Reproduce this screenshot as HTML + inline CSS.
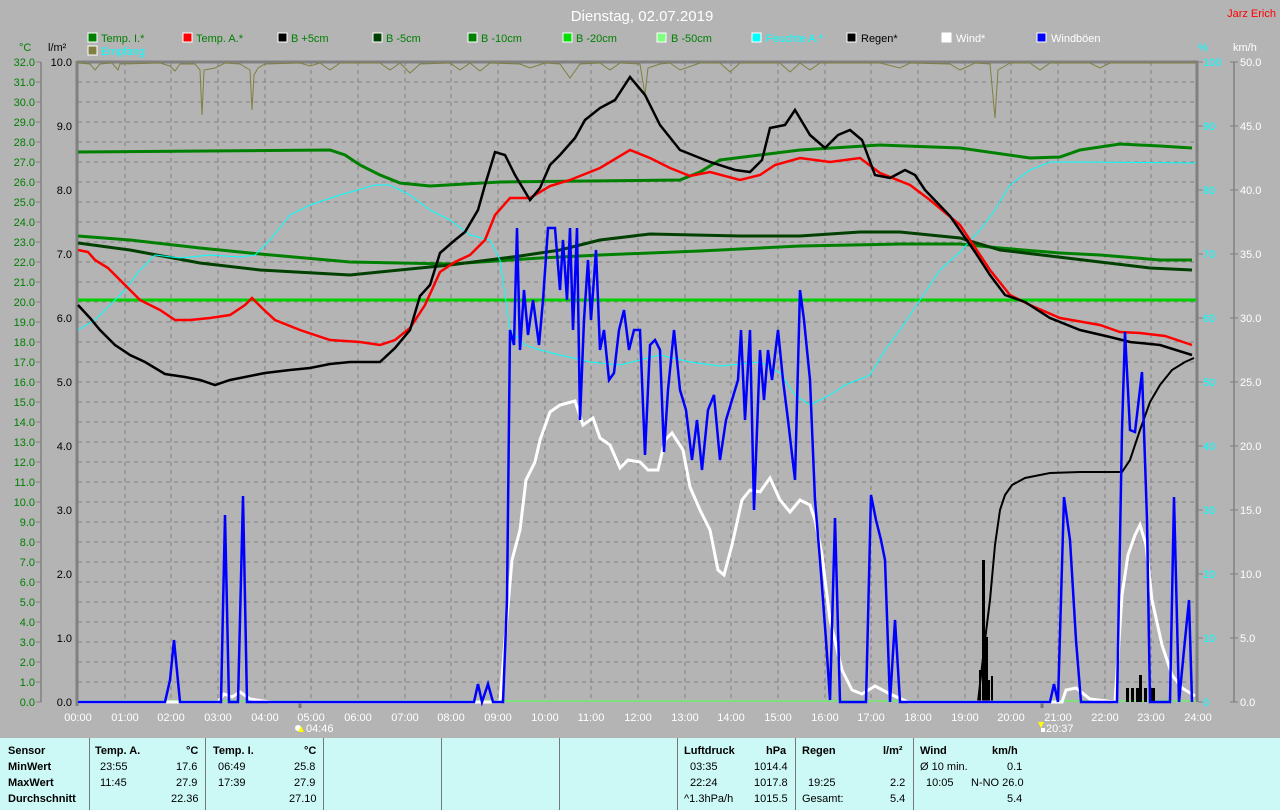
<!DOCTYPE html>
<html><head><meta charset="utf-8"><style>
html,body{margin:0;padding:0;background:#b4b4b4;width:1280px;height:810px;overflow:hidden;font-family:"Liberation Sans",sans-serif}
svg{position:absolute;left:0;top:0}
#tbl{position:absolute;left:0;top:738px;width:1280px;height:72px;background:#ccf8f6;font-size:11px;color:#000}
#tbl .v{position:absolute;top:0;width:1px;height:72px;background:#777}
#tbl span{position:absolute;white-space:nowrap}
.b{font-weight:bold}
</style></head><body>
<svg width="1280" height="738" font-family="Liberation Sans, sans-serif">
<text x="642" y="21" fill="#fff" font-size="15" text-anchor="middle">Dienstag, 02.07.2019</text>
<text x="1276" y="17" fill="#f00" font-size="11" text-anchor="end">Jarz Erich</text>
<g font-size="11">
<rect x="88" y="33" width="9" height="9" fill="#008000" stroke="#fff"/><text x="101" y="42" fill="#008000">Temp. I.*</text>
<rect x="183" y="33" width="9" height="9" fill="#f00" stroke="#fff"/><text x="196" y="42" fill="#008000">Temp. A.*</text>
<rect x="278" y="33" width="9" height="9" fill="#000" stroke="#fff"/><text x="291" y="42" fill="#008000">B +5cm</text>
<rect x="373" y="33" width="9" height="9" fill="#004000" stroke="#fff"/><text x="386" y="42" fill="#008000">B -5cm</text>
<rect x="468" y="33" width="9" height="9" fill="#008000" stroke="#fff"/><text x="481" y="42" fill="#008000">B -10cm</text>
<rect x="563" y="33" width="9" height="9" fill="#00e000" stroke="#fff"/><text x="576" y="42" fill="#008000">B -20cm</text>
<rect x="657" y="33" width="9" height="9" fill="#80ff80" stroke="#fff"/><text x="671" y="42" fill="#008000">B -50cm</text>
<rect x="752" y="33" width="9" height="9" fill="#0ff" stroke="#fff"/><text x="766" y="42" fill="#0ff">Feuchte A.*</text>
<rect x="847" y="33" width="9" height="9" fill="#000" stroke="#fff"/><text x="861" y="42" fill="#000">Regen*</text>
<rect x="942" y="33" width="9" height="9" fill="#fff" stroke="#fff"/><text x="956" y="42" fill="#fff">Wind*</text>
<rect x="1037" y="33" width="9" height="9" fill="#00f" stroke="#fff"/><text x="1051" y="42" fill="#fff">Windböen</text>
<rect x="88" y="46" width="9" height="9" fill="#808040" stroke="#fff"/><text x="101" y="55" fill="#0ff">Empfang</text>
<text x="19" y="51" fill="#008000">°C</text>
<text x="48" y="51" fill="#000">l/m²</text>
<text x="1198" y="51" fill="#0ff">%</text>
<text x="1233" y="51" fill="#fff">km/h</text>
</g>
<g stroke="#808080" stroke-dasharray="4,4" stroke-width="1">
<path d="M78 82H1196M78 102H1196M78 122H1196M78 142H1196M78 162H1196M78 182H1196M78 202H1196M78 222H1196M78 242H1196M78 262H1196M78 282H1196M78 302H1196M78 322H1196M78 342H1196M78 362H1196M78 382H1196M78 402H1196M78 422H1196M78 442H1196M78 462H1196M78 482H1196M78 502H1196M78 522H1196M78 542H1196M78 562H1196M78 582H1196M78 602H1196M78 622H1196M78 642H1196M78 662H1196M78 682H1196"/>
<path d="M125 62V702M171 62V702M218 62V702M265 62V702M311 62V702M358 62V702M405 62V702M451 62V702M498 62V702M545 62V702M591 62V702M638 62V702M685 62V702M731 62V702M778 62V702M825 62V702M871 62V702M918 62V702M965 62V702M1011 62V702M1058 62V702M1105 62V702M1151 62V702"/>
</g>
<path d="M77 62H1197V702" fill="none" stroke="#808080" stroke-width="3"/>
<path d="M77 61V706" stroke="#808080" stroke-width="3"/>
<path d="M41 62V702M1234 62V702" stroke="#808080" stroke-width="1.5"/>
<path d="M300 700V708M1042 700V708" stroke="#777" stroke-width="3"/>
<g font-size="11" fill="#008000" text-anchor="end">
<text x="35" y="66">32.0</text><text x="35" y="86">31.0</text><text x="35" y="106">30.0</text><text x="35" y="126">29.0</text><text x="35" y="146">28.0</text><text x="35" y="166">27.0</text><text x="35" y="186">26.0</text><text x="35" y="206">25.0</text><text x="35" y="226">24.0</text><text x="35" y="246">23.0</text><text x="35" y="266">22.0</text><text x="35" y="286">21.0</text><text x="35" y="306">20.0</text><text x="35" y="326">19.0</text><text x="35" y="346">18.0</text><text x="35" y="366">17.0</text><text x="35" y="386">16.0</text><text x="35" y="406">15.0</text><text x="35" y="426">14.0</text><text x="35" y="446">13.0</text><text x="35" y="466">12.0</text><text x="35" y="486">11.0</text><text x="35" y="506">10.0</text><text x="35" y="526">9.0</text><text x="35" y="546">8.0</text><text x="35" y="566">7.0</text><text x="35" y="586">6.0</text><text x="35" y="606">5.0</text><text x="35" y="626">4.0</text><text x="35" y="646">3.0</text><text x="35" y="666">2.0</text><text x="35" y="686">1.0</text><text x="35" y="706">0.0</text>
</g>
<g stroke="#808080"><path d="M36 62H41M36 82H41M36 102H41M36 122H41M36 142H41M36 162H41M36 182H41M36 202H41M36 222H41M36 242H41M36 262H41M36 282H41M36 302H41M36 322H41M36 342H41M36 362H41M36 382H41M36 402H41M36 422H41M36 442H41M36 462H41M36 482H41M36 502H41M36 522H41M36 542H41M36 562H41M36 582H41M36 602H41M36 622H41M36 642H41M36 662H41M36 682H41M36 702H41"/>
<path d="M1198 62H1203M1198 126H1203M1198 190H1203M1198 254H1203M1198 318H1203M1198 382H1203M1198 446H1203M1198 510H1203M1198 574H1203M1198 638H1203M1198 702H1203M1230 62H1238M1230 126H1238M1230 190H1238M1230 254H1238M1230 318H1238M1230 382H1238M1230 446H1238M1230 510H1238M1230 574H1238M1230 638H1238M1230 702H1238"/></g>
<g font-size="11" fill="#000" text-anchor="end">
<text x="72" y="66">10.0</text><text x="72" y="130">9.0</text><text x="72" y="194">8.0</text><text x="72" y="258">7.0</text><text x="72" y="322">6.0</text><text x="72" y="386">5.0</text><text x="72" y="450">4.0</text><text x="72" y="514">3.0</text><text x="72" y="578">2.0</text><text x="72" y="642">1.0</text><text x="72" y="706">0.0</text>
</g>
<g font-size="11" fill="#0ff">
<text x="1203" y="66">100</text><text x="1203" y="130">90</text><text x="1203" y="194">80</text><text x="1203" y="258">70</text><text x="1203" y="322">60</text><text x="1203" y="386">50</text><text x="1203" y="450">40</text><text x="1203" y="514">30</text><text x="1203" y="578">20</text><text x="1203" y="642">10</text><text x="1203" y="706">0</text>
</g>
<g font-size="11" fill="#fff">
<text x="1240" y="66">50.0</text><text x="1240" y="130">45.0</text><text x="1240" y="194">40.0</text><text x="1240" y="258">35.0</text><text x="1240" y="322">30.0</text><text x="1240" y="386">25.0</text><text x="1240" y="450">20.0</text><text x="1240" y="514">15.0</text><text x="1240" y="578">10.0</text><text x="1240" y="642">5.0</text><text x="1240" y="706">0.0</text>
</g>
<g font-size="11" fill="#fff" text-anchor="middle">
<text x="78" y="721">00:00</text><text x="125" y="721">01:00</text><text x="171" y="721">02:00</text><text x="218" y="721">03:00</text><text x="265" y="721">04:00</text><text x="311" y="721">05:00</text><text x="358" y="721">06:00</text><text x="405" y="721">07:00</text><text x="451" y="721">08:00</text><text x="498" y="721">09:00</text><text x="545" y="721">10:00</text><text x="591" y="721">11:00</text><text x="638" y="721">12:00</text><text x="685" y="721">13:00</text><text x="731" y="721">14:00</text><text x="778" y="721">15:00</text><text x="825" y="721">16:00</text><text x="871" y="721">17:00</text><text x="918" y="721">18:00</text><text x="965" y="721">19:00</text><text x="1011" y="721">20:00</text><text x="1058" y="721">21:00</text><text x="1105" y="721">22:00</text><text x="1151" y="721">23:00</text><text x="1198" y="721">24:00</text>
</g>
<g font-size="11" fill="#fff"><text x="306" y="732">04:46</text><text x="1046" y="732">20:37</text></g>
<circle cx="298" cy="728" r="3" fill="#fff"/><path d="M301 726l-3 6h6z" fill="#ff0"/>
<path d="M1038 722l3 6 3-6z" fill="#ff0"/><rect x="1041" y="728" width="4" height="4" fill="#fff"/>
<polyline fill="none" stroke="#808040" stroke-width="1" points="78,63 90,64 95,70 100,64 112,63 118,70 120,64 160,63 170,66 175,71 180,64 195,64 200,70 202,115 204,70 215,68 225,63 240,64 250,70 252,110 254,75 258,68 265,64 300,63 310,66 320,63 330,70 340,63 380,63 390,70 400,63 410,73 420,64 450,63 460,70 470,63 480,71 490,63 520,64 530,68 545,63 560,64 570,78 580,64 600,63 610,70 620,63 640,64 645,95 648,68 660,64 670,63 680,70 700,63 720,63 730,72 740,63 780,63 790,72 800,63 810,70 820,63 880,63 900,68 910,63 950,64 960,70 975,63 990,64 995,118 998,70 1010,63 1030,63 1040,70 1050,63 1090,63 1100,68 1110,63 1196,63"/>
<path d="M78 300H1196" stroke="#00d000" stroke-width="3"/>
<path d="M78 701H1196" stroke="#80e080" stroke-width="2"/>
<polyline fill="none" stroke="#008000" stroke-width="3" points="78,152 330,150 345,155 360,165 380,175 400,183 430,186 500,182 680,180 700,172 720,160 800,150 880,145 960,148 1030,158 1060,157 1080,150 1120,144 1160,146 1192,148"/>
<polyline fill="none" stroke="#008000" stroke-width="3" points="78,236 130,240 200,248 260,254 350,262 450,264 540,258 600,255 700,251 800,246 900,244 960,244 1000,248 1060,253 1100,255 1160,260 1192,260"/>
<polyline fill="none" stroke="#004000" stroke-width="3" points="78,243 130,250 200,263 260,270 350,275 450,265 520,256 560,250 600,240 650,234 740,236 800,236 860,232 900,232 960,238 1000,250 1100,262 1150,268 1192,270"/>
<polyline fill="none" stroke="#0ff" stroke-width="1" points="78,330 95,320 115,300 125,290 140,270 155,255 180,258 210,255 240,257 255,255 270,240 290,215 310,205 340,195 375,185 390,185 410,195 430,210 450,220 470,235 490,240 500,260 510,330 525,345 540,350 560,355 590,362 620,365 660,355 690,362 720,366 760,362 780,373 795,395 810,405 830,395 845,385 870,375 885,350 900,330 920,300 940,270 960,252 980,230 995,210 1010,185 1030,170 1050,162 1080,162 1196,163"/>
<polyline fill="none" stroke="#f00" stroke-width="2.5" points="78,250 88,252 95,260 108,268 120,280 140,300 160,310 175,320 190,320 210,318 230,315 245,305 252,298 262,308 275,320 300,330 330,340 360,342 380,345 395,340 410,328 425,305 440,272 455,262 470,255 485,240 495,215 510,198 530,198 550,186 570,180 600,168 630,150 650,158 670,168 690,176 710,172 740,180 760,175 775,165 800,158 830,162 860,158 880,173 910,185 930,200 960,225 990,270 1010,295 1030,305 1060,318 1100,325 1120,332 1140,333 1165,336 1192,345"/>
<polyline fill="none" stroke="#000" stroke-width="2.5" points="78,305 90,318 100,330 115,345 130,355 145,362 165,374 185,377 200,380 215,385 230,380 245,377 265,373 290,370 310,368 330,364 350,362 380,362 395,348 410,330 420,296 430,285 440,253 455,240 465,232 478,210 485,185 495,152 505,155 515,175 530,200 540,188 550,165 560,155 575,138 585,120 600,108 615,100 630,77 645,95 660,125 680,150 710,162 735,170 750,172 762,160 770,128 785,125 795,110 810,135 825,148 838,135 850,130 862,140 875,175 890,178 905,170 915,175 925,190 950,216 975,252 990,275 1005,295 1025,302 1050,318 1080,330 1110,337 1130,342 1160,345 1192,355"/>
<g fill="#000">
<rect x="979" y="670" width="2" height="32"/><rect x="982" y="560" width="3" height="142"/><rect x="985" y="637" width="3" height="65"/><rect x="988" y="680" width="2" height="22"/><rect x="991" y="676" width="2" height="26"/>
<rect x="1126" y="688" width="3" height="14"/><rect x="1131" y="688" width="3" height="14"/><rect x="1136" y="688" width="3" height="14"/><rect x="1139" y="675" width="3" height="27"/><rect x="1144" y="688" width="3" height="14"/><rect x="1149" y="688" width="3" height="14"/><rect x="1152" y="688" width="3" height="14"/>
</g>
<polyline fill="none" stroke="#000" stroke-width="2" points="978,702 985,640 990,600 995,545 1000,510 1005,495 1012,485 1025,478 1050,473 1080,472 1122,472 1130,460 1140,430 1150,402 1160,385 1172,370 1185,362 1194,358"/>
<polyline fill="none" stroke="#fff" stroke-width="3" points="78,702 218,702 224,694 232,697 240,692 250,699 270,702 500,702 505,640 512,560 520,530 526,480 535,462 540,440 550,412 560,405 575,401 583,425 593,418 600,438 610,445 620,468 628,460 640,462 648,470 658,470 665,440 672,433 683,450 690,487 700,510 710,530 718,570 724,575 732,545 742,500 750,490 760,492 770,478 780,500 790,512 800,500 810,505 815,520 822,555 830,620 842,670 852,690 862,694 875,686 890,694 908,702 1062,702 1066,690 1076,688 1090,699 1115,702 1122,595 1128,555 1135,535 1140,525 1146,545 1152,600 1162,645 1172,675 1182,688 1195,696"/>
<polyline fill="none" stroke="#00f" stroke-width="2.5" points="78,702 165,702 170,680 174,640 180,702 221,702 225,515 229,702 238,702 243,496 247,702 474,702 478,684 482,702 488,684 493,702 503,702 507,600 510,330 514,345 517,228 520,350 524,290 528,335 533,300 539,345 543,300 548,228 555,228 560,290 563,240 567,300 570,228 573,330 577,228 580,420 584,320 588,260 591,320 596,250 600,350 604,330 609,380 614,373 619,330 624,310 629,350 634,330 640,330 645,455 650,345 655,340 660,350 664,452 668,390 674,330 680,390 686,410 692,460 697,420 702,470 708,410 714,395 720,460 726,420 732,400 738,380 741,330 745,420 750,330 754,510 760,350 764,400 768,350 772,380 778,330 783,380 788,420 795,480 800,290 804,320 810,380 815,500 820,560 826,640 830,700 835,518 840,702 866,702 871,495 876,520 881,540 885,560 890,702 895,620 900,702 1050,702 1054,684 1058,702 1064,497 1070,540 1076,640 1081,702 1117,702 1122,430 1125,332 1130,430 1135,432 1142,372 1147,520 1150,702 1170,702 1174,497 1179,702 1184,650 1189,600 1192,702"/>
</svg>
<div id="tbl">
<div class="v" style="left:89px"></div><div class="v" style="left:205px"></div><div class="v" style="left:323px"></div><div class="v" style="left:441px"></div><div class="v" style="left:559px"></div><div class="v" style="left:677px"></div><div class="v" style="left:795px"></div><div class="v" style="left:913px"></div>
<span class="b" style="left:8px;top:7px">Sensor</span><span class="b" style="left:8px;top:23px">MinWert</span><span class="b" style="left:8px;top:39px">MaxWert</span><span class="b" style="left:8px;top:55px">Durchschnitt</span>
<span class="b" style="left:95px;top:7px">Temp. A.</span><span class="b" style="left:186px;top:7px">°C</span>
<span style="left:100px;top:23px">23:55</span><span style="left:176px;top:23px">17.6</span>
<span style="left:100px;top:39px">11:45</span><span style="left:176px;top:39px">27.9</span>
<span style="left:171px;top:55px">22.36</span>
<span class="b" style="left:213px;top:7px">Temp. I.</span><span class="b" style="left:304px;top:7px">°C</span>
<span style="left:218px;top:23px">06:49</span><span style="left:294px;top:23px">25.8</span>
<span style="left:218px;top:39px">17:39</span><span style="left:294px;top:39px">27.9</span>
<span style="left:289px;top:55px">27.10</span>
<span class="b" style="left:684px;top:7px">Luftdruck</span><span class="b" style="left:766px;top:7px">hPa</span>
<span style="left:690px;top:23px">03:35</span><span style="left:754px;top:23px">1014.4</span>
<span style="left:690px;top:39px">22:24</span><span style="left:754px;top:39px">1017.8</span>
<span style="left:684px;top:55px">^1.3hPa/h</span><span style="left:754px;top:55px">1015.5</span>
<span class="b" style="left:802px;top:7px">Regen</span><span class="b" style="left:883px;top:7px">l/m²</span>
<span style="left:808px;top:39px">19:25</span><span style="left:890px;top:39px">2.2</span>
<span style="left:802px;top:55px">Gesamt:</span><span style="left:890px;top:55px">5.4</span>
<span class="b" style="left:920px;top:7px">Wind</span><span class="b" style="left:992px;top:7px">km/h</span>
<span style="left:920px;top:23px">Ø 10 min.</span><span style="left:1007px;top:23px">0.1</span>
<span style="left:926px;top:39px">10:05</span><span style="left:971px;top:39px">N-NO 26.0</span>
<span style="left:1007px;top:55px">5.4</span>
</div>
</body></html>
